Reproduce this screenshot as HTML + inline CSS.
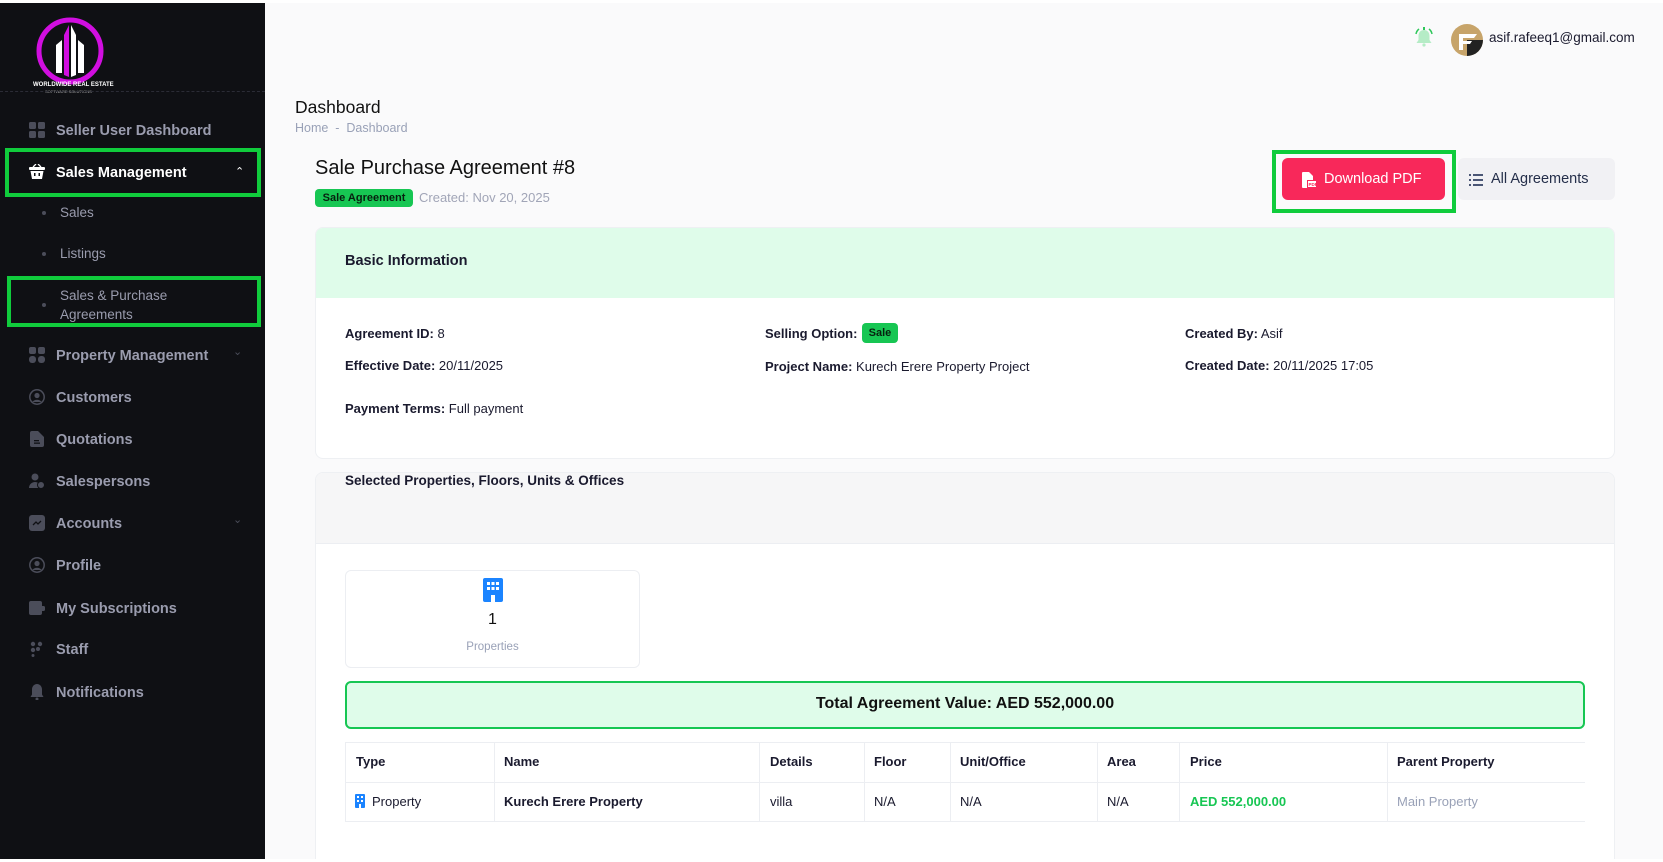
<!DOCTYPE html>
<html><head><meta charset="utf-8"><style>
*{box-sizing:border-box;margin:0;padding:0}
html{width:1663px;height:862px;overflow:hidden}
body{width:1663px;height:862px;overflow:hidden;background:#fafafb;font-family:"Liberation Sans",sans-serif;position:relative;color:#1a1a2e}
.sb{position:absolute;left:0;top:3px;width:265px;height:856px;background:#0f1014}
.abs{position:absolute}
.mi{position:absolute;left:56px;font-size:14.5px;font-weight:bold;color:#9a9cae;line-height:18px}
.ic{position:absolute;left:29px;width:16px;height:16px}
.sub{position:absolute;left:60px;font-size:13.5px;color:#9a9cae}
.dot{position:absolute;left:42px;width:4px;height:4px;border-radius:2px;background:#4b4d5a}
.gbox{position:absolute;border:4px solid #10cc3c}
.card{position:absolute;background:#fff;border:1px solid #eef0f3;border-radius:8px}
.lab{position:absolute;font-size:13px;color:#1a1a2e}
.lab b{font-weight:bold}
.th{position:absolute;top:754px;font-size:13px;font-weight:bold;color:#1a1a2e}
.td{position:absolute;top:794px;font-size:13px;color:#1a1a2e}
.vl{position:absolute;top:742px;width:1px;height:80px;background:#eceef2}
</style></head><body>
<div style="position:absolute;left:0;top:0;width:1663px;height:3px;background:#fff"></div>
<div class="sb">
 <svg class="abs" style="left:34px;top:12px" width="72" height="72" viewBox="0 0 72 72">
  <circle cx="36" cy="36" r="31" fill="none" stroke="#d10ee0" stroke-width="5"/>
  <polygon points="22,30 28,25 28,58 22,58" fill="#fff"/>
  <polygon points="30,20 35,10 35,62 30,60" fill="#d10ee0"/>
  <polygon points="37,10 42,20 42,60 37,62" fill="#fff"/>
  <polygon points="44,25 50,30 50,58 44,58" fill="#fff"/>
 </svg>
 <div class="abs" style="left:33px;top:79px;font-size:6px;color:#fff;font-weight:bold">WORLDWIDE REAL ESTATE</div>
 <div class="abs" style="left:45px;top:86px;font-size:4px;color:#aaa">SOFTWARE SOLUTIONS</div>
 <div class="abs" style="left:0;top:88px;width:265px;border-top:1px dashed #2b2c36"></div>

 <svg class="ic" style="top:119px" viewBox="0 0 16 16" fill="#4b4d5a"><rect x="0" y="0" width="7" height="7" rx="1.5"/><rect x="9" y="0" width="7" height="7" rx="1.5"/><rect x="0" y="9" width="7" height="7" rx="1.5"/><rect x="9" y="9" width="7" height="7" rx="1.5"/></svg>
 <div class="mi" style="top:119px">Seller User Dashboard</div>

 <svg class="ic" style="top:161px" viewBox="0 0 16 16" fill="#fff"><rect x="0" y="3" width="16" height="3" rx="1"/><path d="M1.5 7h13l-1.5 8h-10z"/><rect x="5" y="9" width="1.5" height="3" fill="#0f1014"/><rect x="9.5" y="9" width="1.5" height="3" fill="#0f1014"/><path d="M4 3l3-3M12 3l-3-3" stroke="#fff" stroke-width="1.3"/></svg>
 <div class="mi" style="top:161px;color:#fff">Sales Management</div>
 <div class="abs" style="left:235px;top:162px;color:#fff;font-size:11px">&#8963;</div>

 <div class="dot" style="top:208px"></div><div class="sub" style="top:202px">Sales</div>
 <div class="dot" style="top:249px"></div><div class="sub" style="top:243px">Listings</div>
 <div class="dot" style="top:300px"></div><div class="sub" style="top:283px;line-height:19px">Sales &amp; Purchase<br>Agreements</div>

 <svg class="ic" style="top:344px" viewBox="0 0 16 16" fill="#4b4d5a"><rect x="0" y="0" width="7" height="7" rx="2"/><rect x="9" y="0" width="7" height="7" rx="2"/><rect x="0" y="9" width="7" height="7" rx="3"/><rect x="9" y="9" width="7" height="7" rx="3"/></svg>
 <div class="mi" style="top:344px">Property Management</div>
 <div class="abs" style="left:233px;top:342px;color:#4b4d5a;font-size:11px">&#8964;</div>

 <svg class="ic" style="top:386px" viewBox="0 0 16 16"><circle cx="8" cy="8" r="7.2" fill="none" stroke="#4b4d5a" stroke-width="1.5"/><circle cx="8" cy="6.5" r="2.6" fill="#4b4d5a"/><path d="M3.5 13a5 4 0 0 1 9 0" fill="#4b4d5a"/></svg>
 <div class="mi" style="top:386px">Customers</div>

 <svg class="ic" style="top:428px" viewBox="0 0 16 16" fill="#4b4d5a"><path d="M1 2a2 2 0 0 1 2-2h6l6 6v8a2 2 0 0 1-2 2H3a2 2 0 0 1-2-2z"/><rect x="5" y="9" width="5" height="1.3" fill="#0f1014"/><rect x="5" y="11.5" width="6" height="1.3" fill="#0f1014"/></svg>
 <div class="mi" style="top:428px">Quotations</div>

 <svg class="ic" style="top:470px" viewBox="0 0 16 16" fill="#4b4d5a"><circle cx="6" cy="4" r="3.5"/><path d="M0 15a6 6 0 0 1 12 0z"/><circle cx="12" cy="12" r="3.5" fill="#4b4d5a" stroke="#0f1014"/></svg>
 <div class="mi" style="top:470px">Salespersons</div>

 <svg class="ic" style="top:512px" viewBox="0 0 16 16"><rect x="0" y="0" width="16" height="16" rx="3" fill="#4b4d5a"/><path d="M4 10l3-3 2 2 3-3" stroke="#0f1014" stroke-width="1.3" fill="none"/></svg>
 <div class="mi" style="top:512px">Accounts</div>
 <div class="abs" style="left:233px;top:510px;color:#4b4d5a;font-size:11px">&#8964;</div>

 <svg class="ic" style="top:554px" viewBox="0 0 16 16"><circle cx="8" cy="8" r="7.2" fill="none" stroke="#4b4d5a" stroke-width="1.5"/><circle cx="8" cy="6.5" r="2.6" fill="#4b4d5a"/><path d="M3.5 13a5 4 0 0 1 9 0" fill="#4b4d5a"/></svg>
 <div class="mi" style="top:554px">Profile</div>

 <svg class="ic" style="top:597px" viewBox="0 0 16 16" fill="#4b4d5a"><rect x="0" y="1" width="13" height="14" rx="2"/><rect x="9" y="6" width="7" height="5" rx="1.5"/></svg>
 <div class="mi" style="top:597px">My Subscriptions</div>

 <svg class="ic" style="top:638px" viewBox="0 0 16 16" fill="#4b4d5a"><circle cx="4" cy="3" r="2.2"/><circle cx="11" cy="3" r="2.2"/><circle cx="4" cy="9" r="2.2"/><circle cx="9" cy="8" r="2"/><circle cx="4" cy="14.5" r="1.5"/></svg>
 <div class="mi" style="top:638px">Staff</div>

 <svg class="ic" style="top:681px" viewBox="0 0 16 16" fill="#4b4d5a"><path d="M8 0c3 0 5 2.5 5 5.5v5l1.5 2.5h-13L3 10.5v-5C3 2.5 5 0 8 0z"/><circle cx="8" cy="15" r="1.5"/></svg>
 <div class="mi" style="top:681px">Notifications</div>
</div>
<div class="gbox" style="left:5px;top:148px;width:256px;height:49px"></div>
<div class="gbox" style="left:7px;top:276px;width:254px;height:51px"></div>

<!-- header -->
<svg class="abs" style="left:1413px;top:26px" width="22" height="22" viewBox="0 0 22 22"><path d="M11 4c3.5 0 5.5 2.5 5.5 6v4l2 3h-15l2-3v-4c0-3.5 2-6 5.5-6z" fill="#b5ecc6"/><circle cx="11" cy="19" r="1.6" fill="#b5ecc6"/><path d="M3 8a8 8 0 0 1 3-5M19 8a8 8 0 0 0-3-5" stroke="#2ec75a" stroke-width="1.5" fill="none"/><rect x="10" y="1" width="2" height="3" fill="#2ec75a"/></svg>
<svg class="abs" style="left:1451px;top:24px" width="32" height="32" viewBox="0 0 32 32"><circle cx="16" cy="16" r="16" fill="#c7a46a"/><path d="M16 32A16 16 0 0 0 32 16H16z" fill="#222"/><path d="M8 10h18l-3 4H12v3h9l-2 3h-7v6H8z" fill="#fff"/></svg>
<div class="abs" style="left:1489px;top:30px;font-size:13.5px;color:#1a1a2e">asif.rafeeq1@gmail.com</div>

<div class="abs" style="left:295px;top:97px;font-size:17.5px;color:#111">Dashboard</div>
<div class="abs" style="left:295px;top:121px;font-size:12.5px;color:#99a1b7">Home &nbsp;-&nbsp; Dashboard</div>

<div class="abs" style="left:315px;top:157px;font-size:20px;color:#111">Sale Purchase Agreement #8</div>
<div class="abs" style="left:315px;top:189px;width:98px;height:18px;background:#17c653;border-radius:4px;font-size:11px;font-weight:bold;text-align:center;line-height:18px;color:#07200f">Sale Agreement</div>
<div class="abs" style="left:419px;top:190px;font-size:13px;color:#a1a5b7">Created: Nov 20, 2025</div>

<div class="gbox" style="left:1272px;top:150px;width:184px;height:63px"></div>
<div class="abs" style="left:1282px;top:158px;width:163px;height:42px;background:#f8285a;border-radius:6px"></div>
<svg class="abs" style="left:1302px;top:172px" width="14" height="16" viewBox="0 0 14 16"><path d="M0 1a1 1 0 0 1 1-1h6l4 4v4H5v8H1a1 1 0 0 1-1-1z" fill="#fff"/><rect x="6" y="9" width="8" height="6" fill="#fff"/><text x="6.5" y="14" font-size="4.5" fill="#f8285a" font-family="Liberation Sans" font-weight="bold">PDF</text></svg>
<div class="abs" style="left:1324px;top:171px;font-size:14.5px;color:#fff">Download PDF</div>
<div class="abs" style="left:1458px;top:158px;width:157px;height:42px;background:#f1f1f4;border-radius:6px"></div>
<svg class="abs" style="left:1469px;top:174px" width="14" height="12" viewBox="0 0 14 12" fill="#4b5675"><rect x="0" y="0" width="2" height="2"/><rect x="0" y="5" width="2" height="2"/><rect x="0" y="10" width="2" height="2"/><rect x="4" y="0" width="10" height="2"/><rect x="4" y="5" width="10" height="2"/><rect x="4" y="10" width="10" height="2"/></svg>
<div class="abs" style="left:1491px;top:171px;font-size:14.5px;color:#252f4a">All Agreements</div>

<!-- basic info -->
<div class="card" style="left:315px;top:227px;width:1300px;height:232px;overflow:hidden">
 <div style="height:70px;background:#dffcea"></div>
</div>
<div class="abs" style="left:345px;top:253px;font-size:14.5px;font-weight:bold;color:#1a1a2e">Basic Information</div>
<div class="lab" style="left:345px;top:326px"><b>Agreement ID:</b> 8</div>
<div class="lab" style="left:345px;top:358px"><b>Effective Date:</b> 20/11/2025</div>
<div class="lab" style="left:345px;top:401px"><b>Payment Terms:</b> Full payment</div>
<div class="lab" style="left:765px;top:326px"><b>Selling Option:</b></div>
<div class="abs" style="left:862px;top:323px;width:36px;height:20px;background:#17c653;border-radius:4px;font-size:11px;font-weight:bold;color:#07200f;text-align:center;line-height:20px">Sale</div>
<div class="lab" style="left:765px;top:359px"><b>Project Name:</b> Kurech Erere Property Project</div>
<div class="lab" style="left:1185px;top:326px"><b>Created By:</b> Asif</div>
<div class="lab" style="left:1185px;top:358px"><b>Created Date:</b> 20/11/2025 17:05</div>

<!-- second card -->
<div class="card" style="left:315px;top:472px;width:1300px;height:400px;overflow:hidden">
 <div style="height:71px;background:#f6f6f7;border-bottom:1px solid #eceef2"></div>
</div>
<div class="abs" style="left:345px;top:473px;font-size:13.5px;font-weight:bold;color:#1a1a2e">Selected Properties, Floors, Units &amp; Offices</div>

<div class="abs" style="left:345px;top:570px;width:295px;height:98px;border:1px solid #eceef2;border-radius:6px;background:#fff"></div>
<svg class="abs" style="left:483px;top:578px" width="20" height="24" viewBox="0 0 20 24"><rect x="0" y="0" width="20" height="24" rx="2" fill="#1b84ff"/><g fill="#fff"><rect x="4" y="4" width="3" height="3"/><rect x="8.5" y="4" width="3" height="3"/><rect x="13" y="4" width="3" height="3"/><rect x="4" y="9" width="3" height="3"/><rect x="8.5" y="9" width="3" height="3"/><rect x="13" y="9" width="3" height="3"/><rect x="8" y="17" width="4" height="7"/></g></svg>
<div class="abs" style="left:345px;top:611px;width:295px;text-align:center;font-size:16px;color:#111">1</div>
<div class="abs" style="left:345px;top:641px;width:295px;text-align:center;font-size:11.5px;color:#99a1b7">Properties</div>

<div class="abs" style="left:345px;top:681px;width:1240px;height:48px;background:#dffcea;border:2px solid #17c653;border-radius:6px"></div>
<div class="abs" style="left:345px;top:695px;width:1240px;text-align:center;font-size:16px;font-weight:bold;color:#111">Total Agreement Value: AED 552,000.00</div>

<div class="abs" style="left:345px;top:742px;width:1240px;height:80px;border-top:1px solid #eceef2;border-bottom:1px solid #eceef2"></div>
<div class="abs" style="left:345px;top:782px;width:1240px;height:1px;background:#eceef2"></div>
<div class="vl" style="left:345px"></div><div class="vl" style="left:494px"></div><div class="vl" style="left:759px"></div><div class="vl" style="left:864px"></div><div class="vl" style="left:950px"></div><div class="vl" style="left:1097px"></div><div class="vl" style="left:1179px"></div><div class="vl" style="left:1387px"></div>
<div class="th" style="left:356px">Type</div><div class="th" style="left:504px">Name</div><div class="th" style="left:770px">Details</div><div class="th" style="left:874px">Floor</div><div class="th" style="left:960px">Unit/Office</div><div class="th" style="left:1107px">Area</div><div class="th" style="left:1190px">Price</div><div class="th" style="left:1397px">Parent Property</div>
<svg class="abs" style="left:355px;top:794px" width="10" height="14" viewBox="0 0 10 14"><rect width="10" height="14" rx="1" fill="#1b84ff"/><g fill="#fff"><rect x="2" y="2" width="2" height="2"/><rect x="6" y="2" width="2" height="2"/><rect x="2" y="6" width="2" height="2"/><rect x="6" y="6" width="2" height="2"/><rect x="4" y="10" width="2" height="4"/></g></svg>
<div class="td" style="left:372px">Property</div><div class="td" style="left:504px;font-weight:bold">Kurech Erere Property</div><div class="td" style="left:770px">villa</div><div class="td" style="left:874px">N/A</div><div class="td" style="left:960px">N/A</div><div class="td" style="left:1107px">N/A</div><div class="td" style="left:1190px;font-weight:bold;color:#17c653">AED 552,000.00</div><div class="td" style="left:1397px;color:#99a1b7">Main Property</div>

<div class="abs" style="left:0;top:859px;width:1663px;height:3px;background:#fff"></div>
</body></html>
